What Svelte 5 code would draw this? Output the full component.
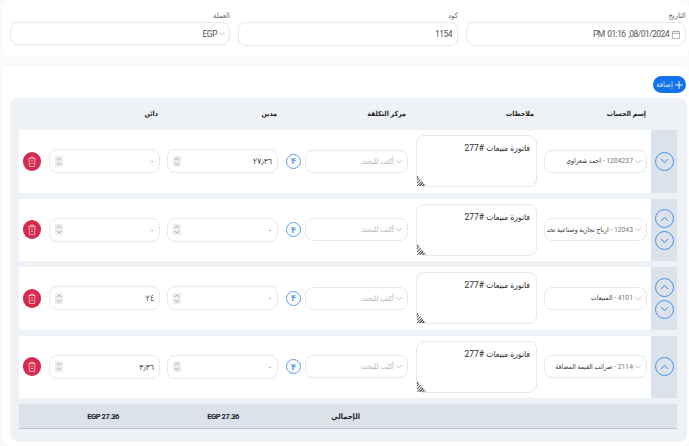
<script>
  let rows = [
    { up: false, down: true, code: "1204237", name: "احمد شعراوي", debit: "٢٧٫٣٦", credit: "٠" },
    { up: true, down: true, code: "12043", name: "ارباح تجارية وصناعية تحت", debit: "٠", credit: "٠" },
    { up: true, down: true, code: "4101", name: "المبيعات", debit: "٠", credit: "٢٤" },
    { up: true, down: false, code: "2114", name: "ضرائب القيمة المضافة", debit: "٠", credit: "٣٫٣٦" }
  ];
</script>

<main dir="rtl">
  <section class="card top">
    <div class="field date">
      <span class="lbl">التاريخ</span>
      <div class="box">
        <svg class="cal" width="8" height="9" viewBox="0 0 8 9"><path d="M.5 1.500h7v7h-7zM.5 3.500h7M2.500.5v2M5.500.5v2" fill="none" stroke="#9a9a9a" stroke-width=".7"/></svg>
        <span class="stamp" dir="ltr">PM 01:16 ,08/01/2024</span>
      </div>
    </div>
    <div class="field code">
      <span class="lbl">كود</span>
      <div class="box">1154</div>
    </div>
    <div class="field cur">
      <span class="lbl">العملة</span>
      <div class="box short">
        <svg class="chev" width="6" height="5" viewBox="0 0 6 5"><path d="M.5 1l2.500 3 2.500-3" fill="none" stroke="#bbb" stroke-width=".8"/></svg>
        EGP
      </div>
    </div>
  </section>

  <section class="card lines">
    <div class="tools">
      <button class="add">
        <svg width="8" height="8" viewBox="0 0 8 8"><path d="M4 0v8M0 4h8" stroke="#fff" stroke-width=".9"/></svg>
        إضافة
      </button>
    </div>
    <div class="panel">
      <div class="grid head">
        <span></span>
        <b class="h-acc">إسم الحساب</b>
        <b class="h-note">ملاحظات</b>
        <b class="h-cost">مركز التكلفة</b>
        <b class="h-debit">مدين</b>
        <b class="h-credit">دائن</b>
        <span></span>
      </div>
      {#each rows as r}
        <div class="grid row">
          <div class="handle">
            {#if r.up}
              <span class="round"><svg width="9" height="6" viewBox="0 0 9 6"><path d="M1 5l3.500-3.500L8 5" fill="none" stroke="#3f86e8" stroke-width="1"/></svg></span>
            {/if}
            {#if r.down}
              <span class="round"><svg width="9" height="6" viewBox="0 0 9 6"><path d="M1 1l3.500 3.500L8 1" fill="none" stroke="#3f86e8" stroke-width="1"/></svg></span>
            {/if}
          </div>
          <div class="cell">
            <div class="select">
              <svg class="chev" width="8" height="5" viewBox="0 0 8 5"><path d="M1 1l3 3 3-3" fill="none" stroke="#bbb" stroke-width=".8"/></svg>
              <span class="acc"><span class="no">{r.code} -</span> {r.name}</span>
            </div>
          </div>
          <div class="cell">
            <div class="note">فاتورة مبيعات #277<i class="grip"></i></div>
          </div>
          <div class="cell cost">
            <div class="select ph">
              <svg class="chev" width="8" height="5" viewBox="0 0 8 5"><path d="M1 1l3 3 3-3" fill="none" stroke="#bbb" stroke-width=".8"/></svg>
              <span>أكتب للبحث</span>
            </div>
            <span class="fx">۴</span>
          </div>
          <div class="cell">
            <div class="num">
              <span>{r.debit}</span>
              <i class="spin"><svg width="8" height="11" viewBox="0 0 8 11"><path d="M2 4l2-2 2 2M2 7l2 2 2-2" fill="none" stroke="#999" stroke-width=".7"/></svg></i>
            </div>
          </div>
          <div class="cell">
            <div class="num">
              <span>{r.credit}</span>
              <i class="spin"><svg width="8" height="11" viewBox="0 0 8 11"><path d="M2 4l2-2 2 2M2 7l2 2 2-2" fill="none" stroke="#999" stroke-width=".7"/></svg></i>
            </div>
          </div>
          <div class="cell">
            <button class="del" aria-label="حذف">
              <svg width="8" height="11" viewBox="0 0 8 11"><path d="M.5 2.500h7M2.500 2.500V1h3v1.500M1 2.500l.5 8h5l.5-8M2.800 5h2.400M2.800 7.500h2.400" fill="none" stroke="#f4b5c0" stroke-width=".9"/></svg>
            </button>
          </div>
        </div>
      {/each}
      <div class="grid foot">
        <span></span>
        <span></span>
        <span></span>
        <b class="h-total">الإجمالي</b>
        <b class="f-debit">EGP 27.36</b>
        <b class="f-credit">EGP 27.36</b>
        <span></span>
      </div>
    </div>
  </section>
</main>

<style>
  :global(body) {
    margin: 0;
    background: #fafbfc;
    font-family: Roboto, "DejaVu Sans Condensed", "DejaVu Sans", sans-serif;
    color: #3f4254;
  }

  main {
    width: 689px;
    height: 446px;
    overflow: hidden;
    box-sizing: border-box;
  }

  .card {
    background: #fff;
    border-radius: 8px;
    margin-left: 2px;
    box-shadow: 0 0 3px rgba(60, 70, 90, 0.05);
  }

  .top {
    height: 57px;
    box-sizing: border-box;
    padding: 10px 3px 0 8px;
    display: grid;
    grid-template-columns: 220px 220px 220px;
    column-gap: 8px;
    margin-bottom: 9px;
  }

  .field {
    display: flex;
    flex-direction: column;
  }

  .lbl {
    font-size: 7.500px;
    line-height: 11px;
    margin-bottom: 1px;
    color: #666;
    letter-spacing: -0.2px;
  }

  .box {
    height: 24px;
    border: 1px solid #e6e8ec;
    border-radius: 8px;
    box-sizing: border-box;
    display: flex;
    align-items: center;
    gap: 3px;
    padding: 0 5px;
    font-size: 8.500px;
    letter-spacing: -0.5px;
    color: #555;
  }

  .stamp {
    letter-spacing: -0.55px;
    word-spacing: 1px;
  }

  .short {
    height: 23px;
    padding-right: 4px;
    gap: 2px;
  }

  .lines {
    height: 380px;
    padding-top: 10px;
    box-sizing: border-box;
  }

  .tools {
    height: 22px;
    padding-right: 3px;
    display: flex;
    justify-content: flex-start;
  }

  .add {
    width: 33px;
    height: 17px;
    border: 0;
    border-radius: 9px;
    background: #1172ea;
    color: #d6e6fc;
    font: 7.500px "DejaVu Sans Condensed", sans-serif;
    display: flex;
    align-items: center;
    justify-content: center;
    gap: 2px;
    padding: 0;
  }

  .panel {
    margin: 0 2px 0 8px;
    height: 344px;
    padding-left: 9px;
    padding-right: 10px;
    background: #eef1f5;
    border-radius: 8px;
    box-sizing: border-box;
  }

  .grid {
    display: grid;
    grid-template-columns: 26px 110px 129px 130px 118px 119px 26px;
  }

  .head {
    height: 32px;
    align-items: center;
    font-size: 7px;
    letter-spacing: -0.4px;
  }

  .head b,
  .foot b {
    font-weight: 700;
    color: #222;
  }

  .h-acc {
    padding-right: 5px;
  }

  .h-note {
    padding-right: 7px;
  }

  .h-cost {
    padding-right: 6px;
  }

  .h-debit {
    padding-right: 5px;
  }

  .h-credit {
    padding-right: 6px;
  }

  .h-total {
    padding-right: 52px;
  }

  .f-debit {
    padding-right: 43px;
  }

  .f-credit {
    padding-right: 45px;
  }

  .row {
    height: 62.500px;
    margin-bottom: 6px;
    background: #fff;
  }

  .handle {
    background: #dbe2ea;
    display: flex;
    flex-direction: column;
    align-items: center;
    justify-content: center;
    gap: 3px;
  }

  .round {
    width: 19px;
    height: 19px;
    box-sizing: border-box;
    border: 1px solid #4d90ee;
    border-radius: 50%;
    display: flex;
    align-items: center;
    justify-content: center;
  }

  .cell {
    display: flex;
    align-items: center;
    justify-content: flex-start;
    padding-right: 4px;
    gap: 4px;
  }

  .select {
    width: 103px;
    height: 23px;
    flex: none;
    box-sizing: border-box;
    background: #fff;
    border: 1px solid #e6e8ec;
    border-radius: 8px;
    display: flex;
    align-items: center;
    gap: 1px;
    padding: 0 4px 0 2px;
    font-size: 7.500px;
    color: #333;
    white-space: nowrap;
    overflow: hidden;
  }

  .chev {
    flex: none;
  }

  .acc {
    min-width: 0;
    overflow: hidden;
    font-size: 6.800px;
    letter-spacing: -0.45px;
  }

  .no {
    color: #777;
  }

  .note {
    position: relative;
    width: 121px;
    height: 52px;
    box-sizing: border-box;
    border: 1px solid #e6e8ec;
    border-radius: 8px;
    padding: 7px 6px;
    font-size: 8.500px;
    letter-spacing: -0.3px;
    color: #2c2c2c;
  }

  .grip {
    position: absolute;
    left: 0;
    bottom: 0;
    width: 9px;
    height: 11px;
    background: repeating-linear-gradient(-45deg, #666 0 1px, #ddd 1px 2px);
    clip-path: polygon(0 0, 100% 100%, 0 100%);
  }

  .ph {
    color: #b5b5b5;
  }

  .fx {
    width: 15px;
    height: 15px;
    flex: none;
    box-sizing: border-box;
    border: 1px solid #5b9bf0;
    border-radius: 50%;
    color: #5b9bf0;
    font-size: 9px;
    font-weight: 700;
    display: flex;
    align-items: center;
    justify-content: center;
  }

  .num {
    width: 111px;
    height: 24px;
    flex: none;
    box-sizing: border-box;
    border: 1px solid #e6e8ec;
    border-radius: 8px;
    display: flex;
    align-items: center;
    justify-content: space-between;
    padding: 0 5px;
    font-size: 8.500px;
    letter-spacing: -0.5px;
    color: #444;
  }

  .spin {
    width: 8px;
    height: 11px;
    background: #ececec;
    display: flex;
  }

  .del {
    width: 18px;
    height: 19px;
    padding: 0;
    border: 0;
    border-radius: 9px;
    background: #d42b50;
    display: flex;
    align-items: center;
    justify-content: center;
  }

  .foot {
    height: 25px;
    align-items: center;
    background: #dbe2ea;
    border-bottom: 1px solid #b9c1cb;
    font-size: 7.500px;
    letter-spacing: -0.4px;
    box-sizing: border-box;
  }
</style>
